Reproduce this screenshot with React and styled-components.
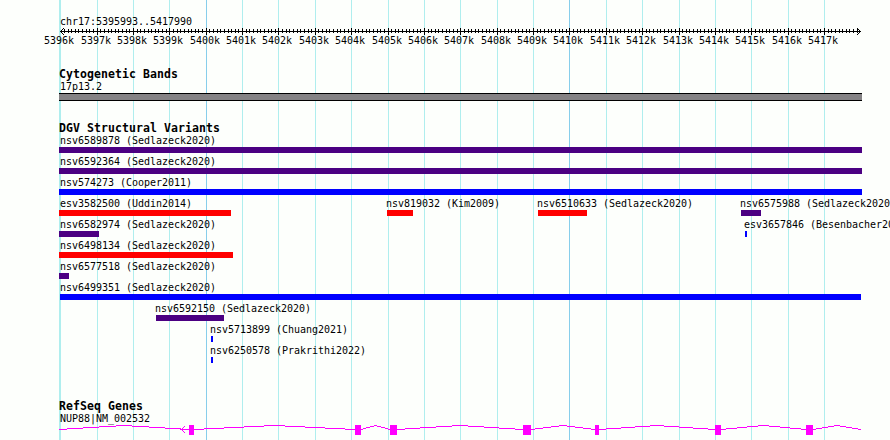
import styled, { createGlobalStyle } from "styled-components";

const GlobalStyle = createGlobalStyle`
  body {
    margin: 0;
    background: #fdfffc;
    overflow: hidden;
  }
`;

const REGION = { start: 5395993, end: 5417990 };
const LEFT = 59;
const WIDTH = 803;
const COLORS = { gain: "#0000ff", loss: "#ff0000", complex: "#4b0082" };

const toX = (pos) => Math.round(60 + ((pos - REGION.start) / (REGION.end - REGION.start)) * 800);

const ticks = Array.from({ length: 22 }, (_, i) => {
  const kb = 5396 + i;
  return { kb, x: toX(kb * 1000) };
});

const minorTicks = Array.from({ length: 220 }, (_, i) => toX(5396000 + i * 100)).filter((x) => x < 858);

// start and end are in drawing pixels
const variantRows = [
  [{ name: "nsv6589878 (Sedlazeck2020)", start: 59, end: 862, type: "complex" }],
  [{ name: "nsv6592364 (Sedlazeck2020)", start: 59, end: 862, type: "complex" }],
  [{ name: "nsv574273 (Cooper2011)", start: 59, end: 862, type: "gain" }],
  [
    { name: "esv3582500 (Uddin2014)", start: 59, end: 231, type: "loss" },
    { name: "nsv819032 (Kim2009)", start: 387, end: 413, type: "loss" },
    { name: "nsv6510633 (Sedlazeck2020)", start: 538, end: 587, type: "loss" },
    { name: "nsv6575988 (Sedlazeck2020)", start: 741, end: 761, type: "complex" },
  ],
  [
    { name: "nsv6582974 (Sedlazeck2020)", start: 59, end: 99, type: "complex" },
    { name: "esv3657846 (Besenbacher2014)", start: 745, end: 747, type: "gain" },
  ],
  [{ name: "nsv6498134 (Sedlazeck2020)", start: 59, end: 233, type: "loss" }],
  [{ name: "nsv6577518 (Sedlazeck2020)", start: 59, end: 69, type: "complex" }],
  [{ name: "nsv6499351 (Sedlazeck2020)", start: 60, end: 861, type: "gain" }],
  [{ name: "nsv6592150 (Sedlazeck2020)", start: 156, end: 224, type: "complex" }],
  [{ name: "nsv5713899 (Chuang2021)", start: 211, end: 213, type: "gain" }],
  [{ name: "nsv6250578 (Prakrithi2022)", start: 211, end: 213, type: "gain" }],
];

const exons = [
  [189, 194],
  [355, 361],
  [390, 397],
  [523, 531],
  [595, 599],
  [715, 721],
  [806, 813],
];

const Browser = styled.main`
  position: relative;
  box-sizing: border-box;
  display: flex;
  flex-direction: column;
  width: 890px;
  height: 440px;
  padding: 16px 0 0 ${LEFT}px;
  overflow: hidden;
  color: #000;
  background: #fdfffc;
  font-family: "DejaVu Sans Mono", "Liberation Mono", monospace;
`;

const GridLines = styled.svg`
  position: absolute;
  inset: 0;
  width: 890px;
  height: 440px;
`;

const Panel = styled.section`
  position: relative;
  display: flex;
  flex-direction: column;
  margin-top: ${(props) => props.$gap || 0}px;
`;

const Label = styled.div`
  height: 12px;
  margin-left: ${(props) => props.$offset ?? 1}px;
  font-size: 10px;
  line-height: 12px;
  letter-spacing: -0.02px;
  white-space: pre;
`;

const Heading = styled.h2`
  height: 13px;
  margin: 0;
  font-size: 11.5px;
  font-weight: bold;
  line-height: 13px;
  letter-spacing: 0.077px;
  white-space: pre;
`;

const Drawing = styled.svg`
  display: block;
  width: ${WIDTH}px;
  height: ${(props) => props.$height}px;
  overflow: visible;
`;

const TickLabels = styled.div`
  display: flex;
  margin-left: -15px;
`;

const TickLabel = styled(Label)`
  flex: none;
  width: ${(props) => props.$width}px;
  margin-left: 0;
`;

const Band = styled.div`
  box-sizing: border-box;
  width: ${WIDTH}px;
  height: 8px;
  border: solid #000;
  border-width: 1px 0;
  background: #848284;
`;

const VariantList = styled.div`
  display: flex;
  flex-direction: column;
  gap: 3px;
`;

const VariantRow = styled.div`
  display: flex;
  height: 18px;
`;

const VariantItem = styled.div`
  flex: none;
  width: ${(props) => props.$width}px;
  margin-left: ${(props) => props.$gap}px;
`;

const Bar = styled.div`
  height: 6px;
  background: ${(props) => COLORS[props.$type]};
`;

function Grid() {
  return (
    <GridLines shapeRendering="crispEdges">
      <rect x="59" y="0" width="1" height="440" fill="#afeeee" />
      {ticks.map(({ kb, x }) => (
        <rect key={kb} x={x} y="0" width="1" height="440" fill={kb % 10 === 0 ? "#87ceeb" : "#afeeee"} />
      ))}
    </GridLines>
  );
}

function Ruler() {
  return (
    <>
      <Drawing $height={7} viewBox={`${LEFT} 0 ${WIDTH} 7`} shapeRendering="crispEdges">
        <rect x="60" y="3" width="801" height="1" />
        {minorTicks.slice(1).map((x) => (
          <rect key={x} x={x} y="1" width="1" height="4" />
        ))}
        {ticks.slice(1).map(({ kb, x }) => (
          <rect key={kb} x={x} y="0" width="1" height="7" />
        ))}
        <path d="M61 2h1v1h-1zM62 1h1v1h-1zM63 0h1v1h-1zM61 4h1v1h-1zM62 5h1v1h-1zM63 6h1v1h-1z" />
        <path d="M859 2h1v1h-1zM858 1h1v1h-1zM857 0h1v1h-1zM859 4h1v1h-1zM858 5h1v1h-1zM857 6h1v1h-1z" />
      </Drawing>
      <TickLabels>
        {ticks.map(({ kb, x }, i) => (
          <TickLabel key={kb} $width={i < ticks.length - 1 ? ticks[i + 1].x - x : 37}>
            {kb}k
          </TickLabel>
        ))}
      </TickLabels>
    </>
  );
}

function Variant({ item, previousEnd }) {
  return (
    <VariantItem $width={item.end - item.start} $gap={item.start - previousEnd}>
      <Label $offset={item.start === 59 ? 1 : item.start === 60 ? 0 : -1}>{item.name}</Label>
      <Bar $type={item.type} />
    </VariantItem>
  );
}

function Gene() {
  const bounds = [LEFT, ...exons.flat(), 861];
  const introns = [];
  for (let i = 0; i < bounds.length; i += 2) {
    introns.push([bounds[i], bounds[i + 1]]);
  }

  return (
    <Drawing $height={10} viewBox={`${LEFT} 0 ${WIDTH} 10`} shapeRendering="crispEdges">
      {introns.map(([start, end]) => (
        <polyline
          key={start}
          points={`${start},4.5 ${(start + end) / 2},0.5 ${end},4.5`}
          fill="none"
          stroke="#ff00ff"
        />
      ))}
      {exons.map(([start, end]) => (
        <rect key={start} x={start} y="0" width={end - start} height="10" fill="#ff00ff" />
      ))}
      <path
        d="M180 4h9v1h-9zM182 3h1v1h-1zM183 2h1v1h-1zM184 1h1v1h-1zM182 5h1v1h-1zM183 6h1v1h-1zM184 7h1v1h-1z"
        fill="#ff00ff"
      />
    </Drawing>
  );
}

export default function App() {
  return (
    <>
      <GlobalStyle />
      <Browser>
        <Grid />

        <Panel>
          <Label>
            chr17:{REGION.start}..{REGION.end}
          </Label>
          <Ruler />
        </Panel>

        <Panel $gap={21}>
          <Heading>Cytogenetic Bands</Heading>
          <Label>17p13.2</Label>
          <Band />
        </Panel>

        <Panel $gap={21}>
          <Heading>DGV Structural Variants</Heading>
          <VariantList>
            {variantRows.map((row) => (
              <VariantRow key={row[0].name}>
                {row.map((item, i) => (
                  <Variant key={item.name} item={item} previousEnd={i ? row[i - 1].end : LEFT} />
                ))}
              </VariantRow>
            ))}
          </VariantList>
        </Panel>

        <Panel $gap={37}>
          <Heading>RefSeq Genes</Heading>
          <Label>NUP88|NM_002532</Label>
          <Gene />
        </Panel>
      </Browser>
    </>
  );
}
